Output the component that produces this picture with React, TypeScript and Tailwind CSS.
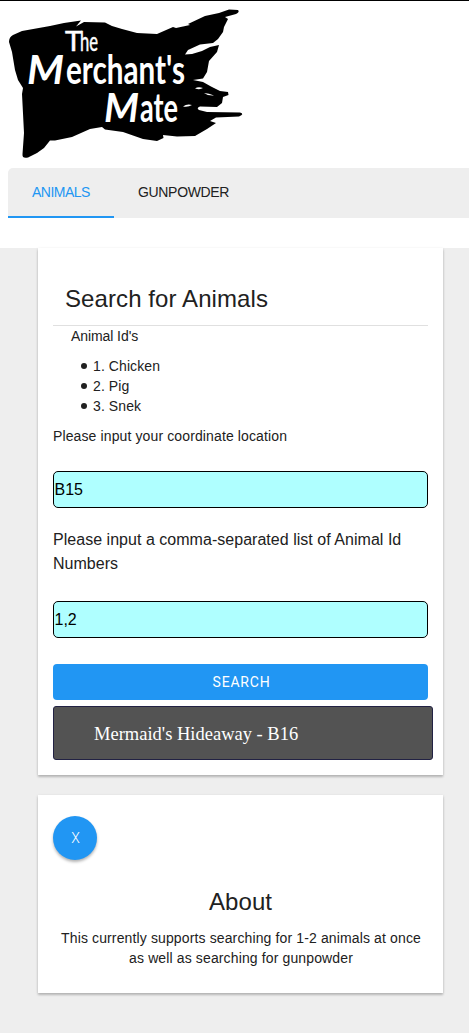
const flagPath =
  'M9 42Q9 37 13 35L22 31L50 26L64 23L81 20.5L76 26.5L84 22L105 22.5L112 26L122 29L137 33L157 34L173 27L176 28L190 25L188 24L205 16L219 13L229 9.5L238 10Q240 12 236 14L225 17L228 19L224 27L223 32L218 39L213 43L200 44.5L188 50L185 54.5L192 54L202 51L210 47L219 45L217 52L209 61L207 72L203 78.5L193 80L203 82L211 86.500L220 91L228 92L228.500 95L223 97L222 103L217 107L200 106.500Q196 108 199 110L207 112L240 112.500Q245 114 239 116.500L216 117.500L210 121L216 123L207 129L195 136L177 136.500L163 135L163.500 138L157 141L143 139L123 132L105 129.500L102 127L90 129L72 137L55 140.500L50 140.500L44 148L37 153L28 157.500Q22 159 22.500 154L24 133L22 94L23 88L18 80L15 70L12 52Z';

function Logo() {
  return (
    <svg width="250" height="160" viewBox="0 0 250 160" className="block" role="img">
      <path d={flagPath} fill="#000" />
      <g fill="#fff">
        <path d="M195 88.500Q198 86.500 203 88Q200 90 195 88.500M204 93Q209 93 214 95.500Q208 96 204 93M183 106.500Q187 103.500 192 105Q188 107.500 183 106.500" />
        <g fontFamily="Lato, sans-serif" fontWeight="700">
          <text y="51" fontSize="26" fontWeight="400" stroke="#fff" strokeWidth="0.5">
            <tspan x="65" textLength="17" lengthAdjust="spacingAndGlyphs">T</tspan>
            <tspan x="80" textLength="18" lengthAdjust="spacingAndGlyphs">he</tspan>
          </text>
          <text y="83.500" fontSize="40">
            <tspan x="27" textLength="37" lengthAdjust="spacingAndGlyphs" fontStyle="italic">M</tspan>
            <tspan x="66" textLength="119" lengthAdjust="spacingAndGlyphs">erchant's</tspan>
          </text>
          <text y="121.500" fontSize="40">
            <tspan x="104" textLength="35" lengthAdjust="spacingAndGlyphs" fontStyle="italic">M</tspan>
            <tspan x="140" textLength="38" lengthAdjust="spacingAndGlyphs">ate</tspan>
          </text>
        </g>
      </g>
    </svg>
  );
}

const cardShadow =
  'bg-white shadow-[0_1px_3px_0_rgba(0,0,0,0.14),0_2px_2px_0_rgba(0,0,0,0.16)]';

const inputStyle =
  'block h-[37px] w-full rounded-[5px] border border-black bg-[#afffff] pl-[0.5px] text-base text-black outline-none';

const animals = ['1. Chicken', '2. Pig', '3. Snek'];

export default function App() {
  return (
    <div className="h-[1033px] w-full overflow-hidden bg-[#eee] font-['Liberation_Sans',Arial,sans-serif] text-sm leading-5 text-[#212121]">
      <header className="h-[248px] border-t border-black bg-white">
        <div className="-mt-px h-[168px]">
          <Logo />
        </div>
        <nav className="ml-2 flex h-[50px] rounded-tl-[5px] bg-[#eee]">
          <a className="flex h-full w-[106px] items-center border-b-2 border-[#2196f3] pl-6 tracking-[-0.5px] text-[#2196f3]">
            ANIMALS
          </a>
          <a className="flex h-full items-center border-b-2 border-transparent px-6 tracking-[-0.33px]">GUNPOWDER</a>
        </nav>
      </header>
      <main className="ml-[38px] w-[405px]">
        <section className={`${cardShadow} h-[527px] px-[15px] pt-[33px]`}>
          <h1 className="h-[45px] border-b border-[#e0e0e0] pl-3 text-2xl leading-9 tracking-[0.09px]">Search for Animals</h1>
          <p className="pl-[18px] tracking-[-0.08px]">Animal Id's</p>
          <ul className="my-2.5 pl-7">
            {animals.map((animal) => (
              <li key={animal} className="flex items-center tracking-[0.09px]">
                <span className="mr-[6.5px] size-[5.5px] rounded-full bg-[#212121]" />
                {animal}
              </li>
            ))}
          </ul>
          <p className="mb-[25px] tracking-[0.12px]">Please input your coordinate location</p>
          <input className={inputStyle} defaultValue="B15" />
          <p className="mt-5 mb-[25px] text-base leading-6 tracking-[0.03px]">
            Please input a comma-separated list of Animal Id Numbers
          </p>
          <input className={inputStyle} defaultValue="1,2" />
          <button className="mt-[26px] block h-9 w-full rounded-sm bg-[#2196f3] pl-[2px] font-[Roboto,sans-serif] text-sm font-normal tracking-[0.8px] text-white">
            SEARCH
          </button>
          <div className="mt-1.5 flex h-[54px] w-[380px] items-center rounded-[3px] border border-[#222244] bg-[#535353] pt-0.5 pl-10 font-['Liberation_Serif',serif] text-[18.5px] text-white">
            Mermaid's Hideaway - B16
          </div>
        </section>
        <section className={`${cardShadow} mt-5 h-[198px] px-[15px] pt-[21px] text-center`}>
          <button className="block size-11 rounded-full bg-[#2196f3] pl-px font-[Roboto,sans-serif] text-sm font-light text-white shadow-[0_2px_3px_rgba(0,0,0,0.3)]">
            X
          </button>
          <h2 className="mt-6 mb-2 text-2xl leading-9 tracking-[0.1px]">About</h2>
          <p className="pr-[3px] pl-1 tracking-[0.13px]">
            This currently supports searching for 1-2 animals at once
            <br />
            as well as searching for gunpowder
          </p>
        </section>
      </main>
    </div>
  );
}
